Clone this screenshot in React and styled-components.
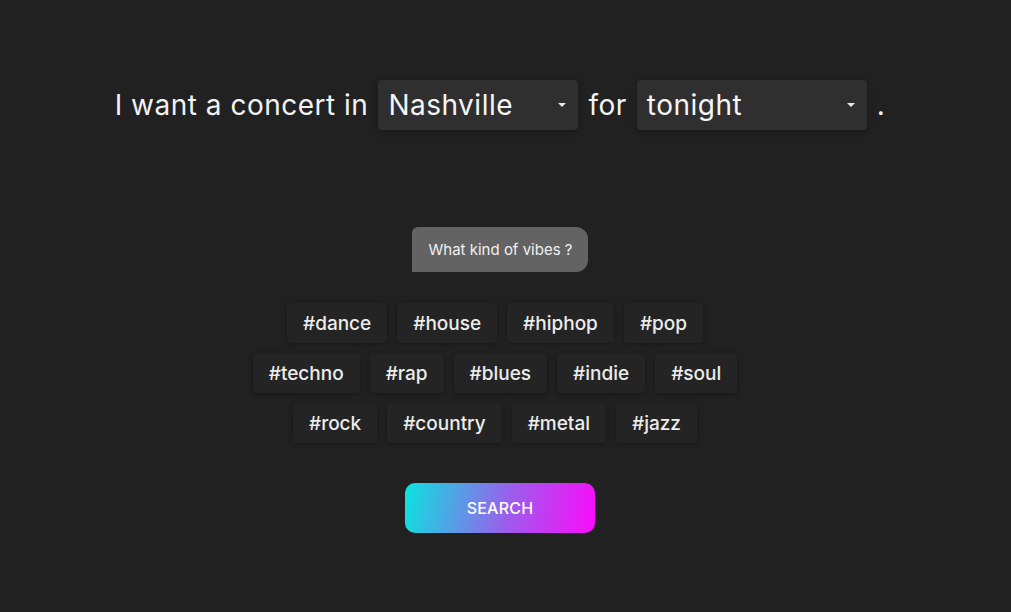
import styled, { createGlobalStyle } from "styled-components";

const GlobalStyle = createGlobalStyle`
  html, body {
    margin: 0;
    padding: 0;
    background: #212121;
    font-family: Inter, "Open Sans", sans-serif;
    color: #f2f2f2;
  }
`;

const tags = [
  ["dance", "house", "hiphop", "pop"],
  ["techno", "rap", "blues", "indie", "soul"],
  ["rock", "country", "metal", "jazz"],
];

const Page = styled.div`
  min-height: 612px;
  display: flex;
  flex-direction: column;
  align-items: center;
  padding: 80px 11px 0 0;
  box-sizing: border-box;
`;

const Headline = styled.div`
  display: flex;
  align-items: center;
  gap: 10px;
  font-size: 28px;
  letter-spacing: 0.5px;
  height: 50px;
`;

const Select = styled.div`
  width: ${(p) => p.width}px;
  height: 50px;
  box-sizing: border-box;
  padding: 0 12px 0 10px;
  display: flex;
  align-items: center;
  justify-content: space-between;
  background: #2f2f2f;
  border-radius: 4px;
  box-shadow: 0 2px 6px rgba(0, 0, 0, 0.25);
  font-size: 28px;
  color: #f5f5f5;
`;

const Caret = styled.span`
  width: 0;
  height: 0;
  border-left: 4px solid transparent;
  border-right: 4px solid transparent;
  border-top: 4px solid #e8e8e8;
`;

const Bubble = styled.div`
  margin-top: 97px;
  height: 45px;
  padding: 0 16px 0 17px;
  display: flex;
  align-items: center;
  background: #636363;
  border-radius: 6px 12px 12px 0;
  font-size: 15px;
  color: #f0f0f0;
`;

const TagList = styled.div`
  margin-top: 31px;
  display: flex;
  flex-direction: column;
  align-items: center;
`;

const TagRow = styled.div`
  display: flex;
  justify-content: center;
`;

const Tag = styled.div`
  height: 40px;
  padding: 0 16px;
  margin: 0 10px 10px 0;
  display: flex;
  align-items: center;
  background: #242424;
  border-radius: 4px;
  box-shadow: 0 1px 5px rgba(0, 0, 0, 0.3);
  font-size: 19px;
  font-weight: 500;
  color: #ececec;
`;

const SearchButton = styled.button`
  margin-top: 30px;
  width: 190px;
  height: 50px;
  border: none;
  border-radius: 10px;
  background: linear-gradient(100deg, #0ce3df 0%, #9d5cec 55%, #fb0bfb 100%);
  color: #fff;
  font-family: Inter, sans-serif;
  font-size: 16px;
  font-weight: 500;
  letter-spacing: 0.2px;
`;

export default function App() {
  return (
    <>
      <GlobalStyle />
      <Page>
        <Headline>
          <span>I want a concert in</span>
          <Select width={200}>
            <span>Nashville</span>
            <Caret />
          </Select>
          <span>for</span>
          <Select width={230}>
            <span>tonight</span>
            <Caret />
          </Select>
          <span>.</span>
        </Headline>
        <Bubble>What kind of vibes ?</Bubble>
        <TagList>
          {tags.map((row, i) => (
            <TagRow key={i}>
              {row.map((t) => (
                <Tag key={t}>#{t}</Tag>
              ))}
            </TagRow>
          ))}
        </TagList>
        <SearchButton>SEARCH</SearchButton>
      </Page>
    </>
  );
}
